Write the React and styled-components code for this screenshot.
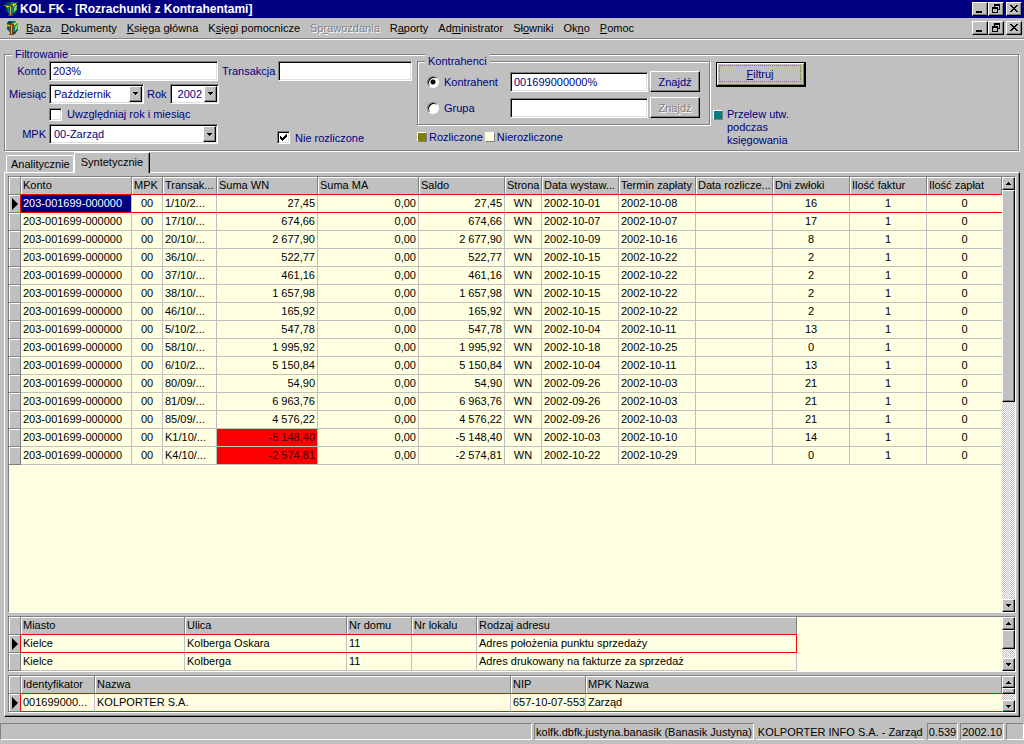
import React from 'react'
import styled, { createGlobalStyle, css } from 'styled-components'

const GlobalStyle = createGlobalStyle`
  * {
    box-sizing: border-box;
  }
  body {
    margin: 0;
    background: #c0c0c0;
  }
  body, button, input, select {
    font-family: "Liberation Sans", Arial, sans-serif;
    font-size: 11px;
  }
`;

const raised = css`
  border: 1px solid;
  border-color: #fff #000 #000 #fff;
  box-shadow: inset -1px -1px 0 #808080;
`;

const sunken = css`
  border: 1px solid;
  border-color: #808080 #fff #fff #808080;
  box-shadow: inset 1px 1px 0 #000, inset -1px -1px 0 #dfdfdf;
`;

const Window = styled.div`
  display: flex;
  flex-direction: column;
  min-height: 100vh;
  background: #c0c0c0;
  color: #000;
  cursor: default;
`;

const TitleBar = styled.header`
  display: flex;
  align-items: center;
  height: 18px;
  padding: 0 2px 0 3px;
  background: #000080;
`;

const Title = styled.h1`
  flex: 1;
  margin: 0 0 0 1px;
  color: #fff;
  font-size: 12px;
  line-height: 16px;
`;

const MenuBar = styled.nav`
  display: flex;
  align-items: center;
  height: 22px;
  padding: 0 2px 2px 4px;
  border-bottom: 1px solid #fff;
  box-shadow: inset 0 -1px 0 #808080;
`;

const MenuList = styled.div`
  display: flex;
  flex: 1;
  gap: 10px;
  padding-left: 6px;
`;

const MenuItem = styled.button`
  padding: 0;
  border: 0;
  background: none;
  color: #000;
  line-height: 14px;
  white-space: nowrap;

  &:disabled {
    color: #808080;
    text-shadow: 1px 1px 0 #fff;
  }
`;

const WindowButtons = styled.div`
  display: flex;
`;

const WindowButton = styled.button`
  ${raised}
  display: flex;
  align-items: center;
  justify-content: center;
  width: 16px;
  height: 14px;
  padding: 0 1px 1px 0;
  background: #c0c0c0;

  &:last-child {
    margin-left: 2px;
  }
`;

const Group = styled.fieldset`
  min-width: 0;
  margin: 0;
  padding: 0;
  border: 1px solid #808080;
  box-shadow: 1px 1px 0 #fff, inset 1px 1px 0 #fff;
`;

const Legend = styled.legend`
  height: 14px;
  margin-left: 7px;
  padding: 0 3px;
  background: #c0c0c0;
  line-height: 15px;
`;

const FilterGroup = styled(Group)`
  margin: 7px 5px 0 4px;
  color: #000080;
`;

const FilterBody = styled.div`
  display: flex;
  padding: 0 0 3px 4px;
`;

const PeriodFields = styled.div`
  display: grid;
  grid-template-columns: 37px 169px;
  grid-template-rows: 20px 21px 16px 20px;
  column-gap: 3px;
  row-gap: 2px;
  align-items: center;
`;

const Label = styled.label`
  text-align: right;
  white-space: nowrap;
`;

const Field = styled.input`
  ${sunken}
  width: 100%;
  height: 20px;
  padding: 0 3px;
  background: #fff;
  color: #000080;
  outline: none;
`;

const Line = styled.div`
  display: flex;
  align-items: center;
  gap: 3px;
`;

const SelectBox = styled.div`
  position: relative;
  flex: none;
  width: ${(p) => p.$width};
`;

const Select = styled.select`
  ${sunken}
  appearance: none;
  width: 100%;
  height: 20px;
  padding: 0 13px 0 ${(p) => (p.$indent ? "7px" : "4px")};
  border-radius: 0;
  background: #fff;
  color: #000080;
  outline: none;
`;

const SelectArrow = styled.span`
  ${raised}
  position: absolute;
  top: 2px;
  right: 2px;
  bottom: 2px;
  display: flex;
  align-items: center;
  justify-content: center;
  width: 13px;
  background: #c0c0c0;
  pointer-events: none;
`;

const Check = styled.label`
  display: flex;
  align-items: center;
  gap: 5px;
  white-space: nowrap;
`;

const CheckMark = styled.span`
  position: relative;
  display: flex;
  width: 13px;
  height: 13px;

  svg {
    position: absolute;
    top: 3px;
    left: 3px;
    pointer-events: none;
  }
`;

const CheckInput = styled.input`
  ${sunken}
  appearance: none;
  width: 13px;
  height: 13px;
  margin: 0;
  background: #fff;
`;

const RadioInput = styled.input`
  appearance: none;
  width: 12px;
  height: 12px;
  margin: 0;
  border: 1px solid;
  border-color: #808080 #fff #fff #808080;
  border-radius: 50%;
  background: #fff;
  box-shadow: inset 1px 1px 0 #000;

  &:checked {
    background: radial-gradient(circle at 5px 5px, #000 2px, #fff 3px);
  }
`;

const TransactionFields = styled.div`
  display: flex;
  flex-direction: column;
  justify-content: space-between;
  width: 190px;
  margin-left: 4px;
`;

const TransactionCheck = styled.div`
  padding: 0 0 3px 55px;
`;

const ClientColumn = styled.div`
  width: 293px;
  margin-left: 5px;
`;

const ClientGroup = styled(Group)`
  margin-top: -7px;
`;

const ClientRows = styled.div`
  display: grid;
  grid-template-columns: 81px 138px 50px;
  grid-template-rows: 21px 21px;
  column-gap: 2px;
  row-gap: 5px;
  align-items: center;
  padding: 3px 8px 6px 9px;
`;

const PushButton = styled.button`
  ${raised}
  height: 21px;
  padding: 0;
  background: #c0c0c0;
  color: #000080;

  &:disabled {
    color: #808080;
    text-shadow: 1px 1px 0 #fff;
  }
`;

const Swatches = styled.div`
  display: flex;
  align-items: center;
  gap: 2px;
  margin-top: 6px;
`;

const Swatch = styled.span`
  flex: none;
  width: 10px;
  height: 10px;
  border: 1px solid;
  border-color: #fff #808080 #808080 #fff;
  background: ${(p) => p.$color};
`;

const ActionColumn = styled.div`
  margin-left: 3px;
`;

const FilterButton = styled.button`
  display: flex;
  width: 90px;
  height: 25px;
  margin: 1px 0 0 3px;
  padding: 2px 3px 3px 2px;
  border: 1px solid #000;
  border-width: 1px 2px 2px 1px;
  background: #c0c0c0;
  box-shadow: inset 1px 1px 0 #fff, inset -1px -1px 0 #808080;
  color: #000080;
`;

const FocusFrame = styled.span`
  flex: 1;
  border: 1px dotted #808000;
  line-height: 16px;
`;

const TransferNote = styled.div`
  display: flex;
  gap: 4px;
  margin-top: 21px;
  line-height: 13px;

  ${Swatch} {
    margin-top: 2px;
  }
`;

const NoteText = styled.span`
  width: 70px;
`;

const TabStrip = styled.div`
  display: flex;
  align-items: flex-end;
  height: 20px;
  margin-top: 1px;
  padding-left: 6px;
`;

const Tab = styled.button`
  position: relative;
  height: ${(p) => (p.$active ? "21px" : "17px")};
  margin-bottom: ${(p) => (p.$active ? "-1px" : "0")};
  padding: ${(p) => (p.$active ? "0 6px 3px" : "0 3px 0 4px")};
  border: 1px solid;
  border-color: #fff ${(p) => (p.$active ? "#000" : "#fff")} transparent #fff;
  border-bottom: 0;
  border-radius: 2px 2px 0 0;
  background: #c0c0c0;
  box-shadow: ${(p) => (p.$active ? "inset -1px 0 0 #808080" : "none")};
  color: #000;
`;

const Page = styled.main`
  display: flex;
  flex: 1;
  flex-direction: column;
  gap: 3px;
  margin: 0 4px;
  padding: 3px;
  border: 1px solid;
  border-color: #fff #000 #000 #fff;
  box-shadow: inset -1px -1px 0 #808080;
`;

const GridFrame = styled.section`
  display: flex;
  flex: ${(p) => (p.$grow ? "1" : "none")};
  border: 1px solid;
  border-color: #808080 #fff #fff #808080;
  background: #ffffe1;
`;

const GridArea = styled.div`
  flex: 1;
  min-width: 0;
`;

const Table = styled.table`
  width: ${(p) => p.$width || "100%"};
  table-layout: fixed;
  border-collapse: separate;
  border-spacing: 0;
`;

const Col = styled.col`
  width: ${(p) => p.$width};
`;

const cell = css`
  height: 18px;
  padding: 0 2px;
  overflow: hidden;
  line-height: 17px;
  white-space: nowrap;
`;

const HeadCell = styled.th`
  ${cell}
  border-right: 1px solid #808080;
  border-bottom: 1px solid #ff0000;
  background: #c0c0c0;
  box-shadow: inset 1px 1px 0 #fff;
  font-weight: normal;
  text-align: left;
`;

const Marker = styled.th`
  ${cell}
  padding: 0;
  border-right: 1px solid ${(p) => (p.$current ? "#ff0000" : "#808080")};
  border-bottom: 1px solid #808080;
  background: #c0c0c0;
  box-shadow: inset 1px 1px 0 #fff;

  svg {
    display: block;
    margin-left: 3px;
  }
`;

const Row = styled.tr`
  td {
    border-bottom-color: ${(p) => (p.$current ? "#ff0000" : "#c0c0c0")};
  }

  td:last-child {
    border-right-color: ${(p) => (p.$current ? "#ff0000" : "#c0c0c0")};
    border-right-width: ${(p) => (p.$closed ? "1px" : "0")};
  }
`;

const Cell = styled.td`
  ${cell}
  border-right: 1px solid #c0c0c0;
  border-bottom: 1px solid #c0c0c0;
  background: ${(p) => (p.$selected ? "#000080" : p.$negative ? "#ff0000" : "#ffffe1")};
  color: ${(p) => (p.$selected ? "#fff" : p.$negative ? "#400000" : "#000")};
  text-align: ${(p) => p.$align || "left"};
`;

const Scroll = styled.div`
  display: flex;
  flex: none;
  flex-direction: column;
  width: 13px;
  background: repeating-conic-gradient(#fff 0 25%, #c0c0c0 0 50%) 0 0 / 2px 2px;
`;

const ScrollButton = styled.button`
  ${raised}
  display: flex;
  flex: none;
  align-items: center;
  justify-content: center;
  width: 13px;
  height: ${(p) => (p.$small ? "12px" : "13px")};
  padding: 0;
  background: #c0c0c0;
`;

const ScrollTrack = styled.div`
  flex: 1;
`;

const ScrollThumb = styled.div`
  ${raised}
  height: ${(p) => p.$size};
  background: #c0c0c0;
`;

const StatusBar = styled.footer`
  display: flex;
  gap: 2px;
  margin-top: 6px;
  padding-bottom: 4px;
`;

const StatusPanel = styled.div`
  flex: ${(p) => (p.$grow ? "1" : "none")};
  min-width: ${(p) => p.$min || "0"};
  height: 17px;
  padding: 0 1px;
  border: 1px solid;
  border-color: ${(p) => (p.$flat ? "transparent transparent #fff" : "#808080 #fff #fff #808080")};
  line-height: 16px;
  white-space: nowrap;
`;

const menu = [
    ["", "B", "aza"],
    ["", "D", "okumenty"],
    ["", "K", "sięga główna"],
    ["K", "s", "ięgi pomocnicze"],
    ["Sp", "r", "awozdania", true],
    ["R", "a", "porty"],
    ["Ad", "m", "inistrator"],
    ["Sł", "o", "wniki"],
    ["Ok", "n", "o"],
    ["", "P", "omoc"],
];

const settlementColumns = [
    { title: "Konto", width: "111px" },
    { title: "MPK", width: "31px", align: "center" },
    { title: "Transak...", width: "54px" },
    { title: "Suma WN", width: "101px", align: "right" },
    { title: "Suma MA", width: "101px", align: "right" },
    { title: "Saldo", width: "86px", align: "right" },
    { title: "Strona", width: "37px", align: "center" },
    { title: "Data wystaw...", width: "77px" },
    { title: "Termin zapłaty", width: "77px" },
    { title: "Data rozlicze...", width: "77px" },
    { title: "Dni zwłoki", width: "77px", align: "center" },
    { title: "Ilość faktur", width: "77px", align: "center" },
    { title: "Ilość zapłat", width: "auto", align: "center" },
];

const settlements = [
    ["1/10/2...", "27,45", "2002-10-01", "2002-10-08", "16"],
    ["17/10/...", "674,66", "2002-10-07", "2002-10-07", "17"],
    ["20/10/...", "2 677,90", "2002-10-09", "2002-10-16", "8"],
    ["36/10/...", "522,77", "2002-10-15", "2002-10-22", "2"],
    ["37/10/...", "461,16", "2002-10-15", "2002-10-22", "2"],
    ["38/10/...", "1 657,98", "2002-10-15", "2002-10-22", "2"],
    ["46/10/...", "165,92", "2002-10-15", "2002-10-22", "2"],
    ["5/10/2...", "547,78", "2002-10-04", "2002-10-11", "13"],
    ["58/10/...", "1 995,92", "2002-10-18", "2002-10-25", "0"],
    ["6/10/2...", "5 150,84", "2002-10-04", "2002-10-11", "13"],
    ["80/09/...", "54,90", "2002-09-26", "2002-10-03", "21"],
    ["81/09/...", "6 963,76", "2002-09-26", "2002-10-03", "21"],
    ["85/09/...", "4 576,22", "2002-09-26", "2002-10-03", "21"],
    ["K1/10/...", "-5 148,40", "2002-10-03", "2002-10-10", "14"],
    ["K4/10/...", "-2 574,81", "2002-10-22", "2002-10-29", "0"],
].map(([doc, sum, issued, due, days]) => [
    "203-001699-000000", "00", doc, sum, "0,00", sum, "WN", issued, due, "", days, "1", "0",
]);

const addressColumns = [
    { title: "Miasto", width: "164px" },
    { title: "Ulica", width: "162px" },
    { title: "Nr domu", width: "65px" },
    { title: "Nr lokalu", width: "65px" },
    { title: "Rodzaj adresu", width: "320px" },
];

const addresses = [
    ["Kielce", "Kolberga Oskara", "11", "", "Adres położenia punktu sprzedaży"],
    ["Kielce", "Kolberga", "11", "", "Adres drukowany na fakturze za sprzedaż"],
];

const clientColumns = [
    { title: "Identyfikator", width: "74px" },
    { title: "Nazwa", width: "416px" },
    { title: "NIP", width: "75px" },
    { title: "MPK Nazwa", width: "auto" },
];

const clients = [["001699000...", "KOLPORTER S.A.", "657-10-07-553", "Zarząd"]];

const Logo = () => (
    <svg width="16" height="16" viewBox="0 0 16 16" aria-hidden="true">
        <path d="M3 3l2-2h6l3 3v5l-3 4H6L3 9z" fill="#008080" />
        <path d="M3 3l2-2h3v2L5 5v5L3 9z" fill="#004848" />
        <path d="M9 12h2l3-4v2l-3 4H9z" fill="#004848" />
        <path d="M0 4l6 1 2-1 7-3-4 4-2 1H5L3 8 4 6z" fill="#e8e000" />
        <path d="M12 5l3-1-2 3 1 1-3 3V8z" fill="#80e040" />
        <path d="M6 4h4v2H9v8h1v1H5v-1h1z" fill="#804000" />
        <path d="M7 5h1v9H7z" fill="#e0a060" />
    </svg>
);

const Arrow = ({ up }) => (
    <svg width="5" height="3" viewBox="0 0 5 3" shapeRendering="crispEdges" aria-hidden="true">
        <path d={up ? "M2 0h1v1h1v1h1v1H0V2h1V1h1z" : "M0 0h5v1H4v1H3v1H2V2H1V1H0z"} />
    </svg>
);

const Controls = () => (
    <WindowButtons>
        <WindowButton aria-label="Minimalizuj">
            <svg width="10" height="9" viewBox="0 0 10 9" shapeRendering="crispEdges">
                <path d="M1 7h6v2H1z" />
            </svg>
        </WindowButton>
        <WindowButton aria-label="Przywróć">
            <svg width="10" height="9" viewBox="0 0 10 9" shapeRendering="crispEdges">
                <path d="M3 0h6v6H7V5h1V2H4v1H3z" />
                <path d="M1 3h6v6H1zM2 5v3h4V5z" fillRule="evenodd" />
            </svg>
        </WindowButton>
        <WindowButton aria-label="Zamknij">
            <svg width="10" height="9" viewBox="0 0 10 9" shapeRendering="crispEdges">
                <path d="M1 1h2v1h1v1h2V2h1V1h2v1H8v1H7v1H6v1h1v1h1v1h1v1H7V7H6V6H4v1H3v1H1V7h1V6h1V5h1V4H3V3H2V2H1z" />
            </svg>
        </WindowButton>
    </WindowButtons>
);

const Combo = ({ id, value, width, indent }) => (
    <SelectBox $width={width}>
        <Select id={id} defaultValue={value} $indent={indent}>
            <option>{value}</option>
        </Select>
        <SelectArrow><Arrow /></SelectArrow>
    </SelectBox>
);

const CheckBox = ({ label, checked }) => (
    <Check>
        <CheckMark>
            <CheckInput type="checkbox" defaultChecked={checked} />
            {checked && (
                <svg width="7" height="7" viewBox="0 0 7 7" shapeRendering="crispEdges">
                    <path d="M0 2h1v1h1v1h1V3h1V2h1V1h1V0h1v3H6v1H5v1H4v1H3v1H2V6H1V5H0z" />
                </svg>
            )}
        </CheckMark>
        {label}
    </Check>
);

const ScrollBar = ({ thumb, small }) => (
    <Scroll>
        <ScrollButton $small={small} aria-label="W górę"><Arrow up /></ScrollButton>
        <ScrollTrack>
            <ScrollThumb $size={thumb} />
        </ScrollTrack>
        <ScrollButton $small={small} aria-label="W dół"><Arrow /></ScrollButton>
    </Scroll>
);

const DataGrid = ({ columns, rows, width, thumb, small, grow, selectFirst }) => (
    <GridFrame $grow={grow}>
        <GridArea>
            <Table $width={width}>
                <colgroup>
                    <Col $width="12px" />
                    {columns.map((c) => <Col key={c.title} $width={c.width} />)}
                </colgroup>
                <thead>
                    <tr>
                        <Marker />
                        {columns.map((c) => <HeadCell key={c.title}>{c.title}</HeadCell>)}
                    </tr>
                </thead>
                <tbody>
                    {rows.map((row, i) => (
                        <Row key={i} $current={i === 0} $closed={Boolean(width)}>
                            <Marker $current={i === 0}>
                                {i === 0 && (
                                    <svg width="6" height="12" viewBox="0 0 6 12">
                                        <path d="M0 0l6 6-6 6z" />
                                    </svg>
                                )}
                            </Marker>
                            {row.map((value, j) => (
                                <Cell
                                    key={j}
                                    $align={columns[j].align}
                                    $selected={selectFirst && i === 0 && j === 0}
                                    $negative={columns[j].title === "Suma WN" && value.startsWith("-")}
                                >
                                    {value}
                                </Cell>
                            ))}
                        </Row>
                    ))}
                </tbody>
            </Table>
        </GridArea>
        <ScrollBar thumb={thumb} small={small} />
    </GridFrame>
);

const Filters = () => (
    <FilterGroup>
        <Legend>Filtrowanie</Legend>
        <FilterBody>
            <PeriodFields>
                <Label htmlFor="konto">Konto</Label>
                <Field id="konto" defaultValue="203%" />
                <Label htmlFor="miesiac">Miesiąc</Label>
                <Line>
                    <Combo id="miesiac" value="Październik" width="95px" />
                    <Label htmlFor="rok">Rok</Label>
                    <Combo id="rok" value="2002" width="49px" indent />
                </Line>
                <span />
                <CheckBox label="Uwzględniaj rok i miesiąc" />
                <Label htmlFor="mpk">MPK</Label>
                <Combo id="mpk" value="00-Zarząd" width="169px" />
            </PeriodFields>
            <TransactionFields>
                <Line>
                    <Label htmlFor="transakcja">Transakcja</Label>
                    <Field id="transakcja" />
                </Line>
                <TransactionCheck>
                    <CheckBox label="Nie rozliczone" checked />
                </TransactionCheck>
            </TransactionFields>
            <ClientColumn>
                <ClientGroup>
                    <Legend>Kontrahenci</Legend>
                    <ClientRows>
                        <Check>
                            <RadioInput type="radio" name="client" defaultChecked />
                            Kontrahent
                        </Check>
                        <Field aria-label="Kontrahent" defaultValue="001699000000%" />
                        <PushButton>Znajdź</PushButton>
                        <Check>
                            <RadioInput type="radio" name="client" />
                            Grupa
                        </Check>
                        <Field aria-label="Grupa" />
                        <PushButton disabled>Znajdź</PushButton>
                    </ClientRows>
                </ClientGroup>
                <Swatches>
                    <Swatch $color="#808000" />
                    <span>Rozliczone</span>
                    <Swatch $color="#ffffe1" />
                    <span>Nierozliczone</span>
                </Swatches>
            </ClientColumn>
            <ActionColumn>
                <FilterButton>
                    <FocusFrame><u>F</u>iltruj</FocusFrame>
                </FilterButton>
                <TransferNote>
                    <Swatch $color="#008080" />
                    <NoteText>Przelew utw. podczas księgowania</NoteText>
                </TransferNote>
            </ActionColumn>
        </FilterBody>
    </FilterGroup>
);

const App = () => {
    return (
        <Window>
            <GlobalStyle />
            <TitleBar>
                <Logo />
                <Title>KOL FK - [Rozrachunki z Kontrahentami]</Title>
                <Controls />
            </TitleBar>
            <MenuBar>
                <Logo />
                <MenuList>
                    {menu.map(([before, key, after, disabled]) => (
                        <MenuItem key={before + key + after} disabled={disabled}>
                            {before}<u>{key}</u>{after}
                        </MenuItem>
                    ))}
                </MenuList>
                <Controls />
            </MenuBar>
            <Filters />
            <TabStrip role="tablist">
                <Tab role="tab" aria-selected="false">Analitycznie</Tab>
                <Tab role="tab" aria-selected="true" $active>Syntetycznie</Tab>
            </TabStrip>
            <Page>
                <DataGrid columns={settlementColumns} rows={settlements} thumb="212px" grow selectFirst />
                <DataGrid columns={addressColumns} rows={addresses} width="788px" thumb="19px" />
                <DataGrid columns={clientColumns} rows={clients} thumb="6px" small />
            </Page>
            <StatusBar>
                <StatusPanel $grow />
                <StatusPanel>kolfk.dbfk.justyna.banasik (Banasik Justyna)</StatusPanel>
                <StatusPanel $flat>KOLPORTER INFO S.A. - Zarząd</StatusPanel>
                <StatusPanel>0.539</StatusPanel>
                <StatusPanel>2002.10</StatusPanel>
                <StatusPanel $min="18px" />
            </StatusBar>
        </Window>
    )
}

export default App
